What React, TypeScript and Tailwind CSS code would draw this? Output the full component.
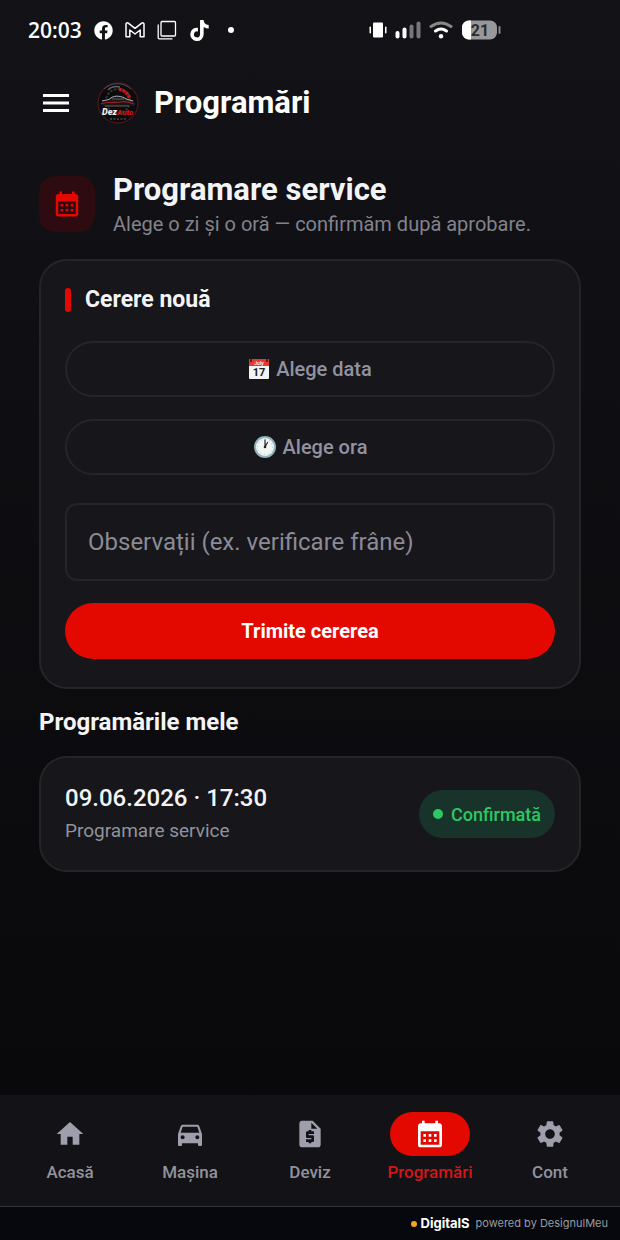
import { useState } from "react";
import {
  MdCalendarMonth,
  MdDirectionsCar,
  MdHome,
  MdRequestQuote,
  MdSettings,
} from "react-icons/md";
import { FaFacebook, FaTiktok } from "react-icons/fa";

const NAV = [
  { path: "#acasa", label: "Acasă", icon: MdHome },
  { path: "#masina", label: "Mașina", icon: MdDirectionsCar },
  { path: "#deviz", label: "Deviz", icon: MdRequestQuote },
  { path: "#programari", label: "Programări", icon: MdCalendarMonth },
  { path: "#cont", label: "Cont", icon: MdSettings },
];

const BOOKINGS = [
  { id: 1, when: "09.06.2026 · 17:30", title: "Programare service", status: "Confirmată" },
];

function StatusBar() {
  return (
    <div className="h-[60px] pl-7 pr-[119px] flex items-center justify-between text-white">
      <div className="flex items-center gap-3">
        <span className="font-['Open_Sans','Noto_Sans',sans-serif] text-[21px] font-semibold leading-6">20:03</span>
        <FaFacebook size={19} />
        <svg width="20" height="16" viewBox="0 0 20 16" fill="none" stroke="currentColor" strokeWidth="1.5" strokeLinejoin="round">
          <path d="M1 2v12.700h3.800V8L10 12l5.200-4v6.700H19V2c0-1-1.300-1.500-2.300-.8L10 6.300 3.300 1.200C2.300.5 1 1 1 2z" />
        </svg>
        <svg width="20" height="20" viewBox="0 0 20 20" fill="none" stroke="currentColor" strokeWidth="1.3">
          <rect x="4" y="1.500" width="14.500" height="14.500" rx="1" />
          <path d="M1.200 4.500v13.300c0 .6.400 1 1 1h13.300" />
        </svg>
        <FaTiktok size={21} />
        <span className="ml-1.5 w-1.5 h-1.5 rounded-full bg-white" />
      </div>

      <div className="flex items-center gap-2">
        <svg width="18" height="16" viewBox="0 0 18 16" fill="currentColor">
          <rect x="4" y="0.500" width="10" height="15" rx="1" />
          <rect x="0.500" y="4.500" width="1.500" height="7" rx="0.700" />
          <rect x="16" y="4.500" width="1.500" height="7" rx="0.700" />
        </svg>
        <svg width="26" height="18" viewBox="0 0 26 18" fill="currentColor">
          <rect x="0.500" y="10" width="4" height="7.500" rx="2" />
          <rect x="7.500" y="6.500" width="4" height="11" rx="2" />
          <rect x="14.500" y="3.500" width="4" height="14" rx="2" fill="#77777b" />
          <rect x="21.500" y="0.500" width="4" height="17" rx="2" fill="#77777b" />
        </svg>
        <svg width="24" height="18" viewBox="0 0 24 18" fill="none" strokeWidth="3" strokeLinecap="round">
          <path d="M2 5.500Q12-1.500 22 5.500" stroke="#88888b" />
          <path d="M6.500 10Q12 6 17.500 10" stroke="currentColor" />
          <circle cx="12" cy="15.200" r="2.200" fill="currentColor" />
        </svg>
        <svg width="40" height="20" viewBox="0 0 40 20">
          <rect x="1" y="0.500" width="35" height="19" rx="7" fill="#98989b" />
          <path d="M8 .5h2v19H8a7 7 0 0 1-7-7v-5a7 7 0 0 1 7-7z" fill="#fff" />
          <rect x="37.500" y="6" width="2" height="8" rx="1" fill="#88888b" />
          <text x="19" y="15.500" textAnchor="middle" fontFamily="Roboto, sans-serif" fontSize="16" fontWeight="700" fill="#2c2c30">21</text>
        </svg>
      </div>
    </div>
  );
}

function Logo() {
  return (
    <svg width="44" height="44" viewBox="0 0 44 44" className="shrink-0" role="img" aria-label="DezAuto">
      <circle cx="22" cy="22" r="20" fill="#0c0a0c" stroke="#4b1719" strokeWidth="1.300" />
      <path d="M8 8a20 20 0 0 1 27 0" fill="none" stroke="#4d4d51" strokeWidth="1" />
      <circle cx="22" cy="20" r="12" fill="none" stroke="#343438" strokeWidth="2" strokeDasharray="2.500 1.500" />
      <path d="M23 8.500a12 12 0 0 1 10.500 8.500" fill="none" stroke="#c31619" strokeWidth="3.500" strokeDasharray="3 0.700" />
      <path d="M12 9c3-3 8-4 12-3" fill="none" stroke="#656569" strokeWidth="1.500" />
      <path d="M5 22c3-3 7-3 10-6 3-2 10-2 14 1l9 3c2 1 2 4 0 5H7z" fill="#171719" />
      <path d="M6 20c4-1 7-1 9-3 4-3 11-2 15 1l7 2" fill="none" stroke="#b3b3b7" strokeWidth="1" />
      <path d="M5 23c7-3 13-1 19-2 5-1 9 0 14 2" fill="none" stroke="#a7191c" strokeWidth="1.200" />
      <path d="M16 18h12M9 25h24" stroke="#77777b" strokeWidth="0.800" />
      <text x="6" y="34" fontFamily="Roboto, sans-serif" fontSize="9" fontWeight="900" fontStyle="italic" fill="#f1f1f1">
        Dez<tspan fill="#d01317" fontSize="8">Auto</tspan>
      </text>
      <path d="M14 38h17" stroke="#606064" strokeWidth="1" strokeDasharray="2 1.500" />
    </svg>
  );
}

function DateIcon() {
  return (
    <svg width="22" height="22" viewBox="0 0 22 22" aria-hidden="true">
      <rect x="1" y="1" width="20" height="20" rx="1" fill="#f4f4f4" />
      <path d="M1 1h20v7H1z" fill="#e13a2e" />
      <path d="M2 1h2v3H2zM18 1h2v3h-2z" fill="#6c1c18" />
      <text x="11" y="6.500" textAnchor="middle" fontFamily="Roboto, sans-serif" fontSize="5" fill="#fff">July</text>
      <text x="11" y="18" textAnchor="middle" fontFamily="Roboto, sans-serif" fontSize="11" fontWeight="700" fill="#202020">17</text>
    </svg>
  );
}

function ClockIcon() {
  return (
    <svg width="24" height="24" viewBox="0 0 24 24" fill="none" aria-hidden="true">
      <circle cx="12" cy="12" r="10" fill="#f3f5f5" stroke="#8eb4bf" strokeWidth="2" />
      <circle cx="12" cy="12" r="7.500" stroke="#a5a8aa" strokeWidth="1" strokeDasharray="0.800 3.127" />
      <path d="M12 12V5M12 12l2.500-4.500" stroke="#333" strokeWidth="1.300" strokeLinecap="round" />
      <circle cx="12" cy="12" r="1.300" fill="#222" />
    </svg>
  );
}

export default function App() {
  const [active, setActive] = useState("Programări");
  const [notes, setNotes] = useState("");

  return (
    <div className="min-h-screen flex flex-col bg-linear-to-b from-[#121217] to-[#08080a] font-['Roboto',sans-serif] text-[#f4f4f7]">
      <StatusBar />

      <header className="h-[86px] px-10 flex items-center">
        <button aria-label="Meniu" className="w-8 h-8 flex items-center justify-center text-white">
          <svg width="26" height="18" viewBox="0 0 26 18" fill="currentColor">
            <path d="M0 0h26v3H0zM0 7.500h26v3H0zM0 15h26v3H0z" />
          </svg>
        </button>
        <div className="ml-6">
          <Logo />
        </div>
        <h1 className="ml-3.5 text-[31px] leading-9 font-bold text-white">Programări</h1>
      </header>

      <main className="flex-1 px-[39px] pt-[26px] pb-8">
        <div className="flex items-center gap-[18px]">
          <div className="w-14 h-14 rounded-2xl bg-[#2d0b10] flex items-center justify-center shrink-0">
            <MdCalendarMonth size={30} className="text-[#e30800]" />
          </div>
          <div>
            <h2 className="text-[31px] leading-9 font-bold">Programare service</h2>
            <p className="mt-1 text-xl leading-6 text-[#83838c]">Alege o zi și o oră — confirmăm după aprobare.</p>
          </div>
        </div>

        {/* New request */}
        <form
          onSubmit={(e) => e.preventDefault()}
          className="mt-[23px] rounded-[28px] border-2 border-[#242429] bg-[#16161b] px-6 pt-6 pb-7"
        >
          <div className="flex items-center gap-3.5">
            <span className="w-1.5 h-6 rounded-[3px] bg-[#e30800]" />
            <h3 className="text-[23px] leading-[30px] font-bold">Cerere nouă</h3>
          </div>
          <button type="button" className="mt-[26px] w-full h-14 rounded-full border-2 border-[#242429] flex items-center justify-center gap-1.5 text-xl font-medium text-[#9292a0]">
            <DateIcon />
            Alege data
          </button>
          <button type="button" className="mt-[22px] w-full h-14 rounded-full border-2 border-[#242429] flex items-center justify-center gap-1.5 text-xl font-medium text-[#9292a0]">
            <ClockIcon />
            Alege ora
          </button>
          <input
            type="text"
            aria-label="Observații"
            placeholder="Observații (ex. verificare frâne)"
            value={notes}
            onChange={(e) => setNotes(e.target.value)}
            className="mt-7 block w-full h-[78px] rounded-xl border-2 border-[#242429] bg-transparent px-[21px] text-2xl placeholder:text-[#8b8b96] outline-none"
          />
          <button type="submit" className="mt-[22px] w-full h-14 rounded-full bg-[#e30800] text-xl font-bold text-white">
            Trimite cererea
          </button>
        </form>

        {/* Bookings */}
        <h3 className="mt-[18px] text-2xl leading-[30px] font-bold">Programările mele</h3>
        {BOOKINGS.map((b) => (
          <article key={b.id} className="mt-[19px] h-[116px] rounded-[28px] border-2 border-[#242429] bg-[#16161b] px-6 flex items-center justify-between">
            <div>
              <p className="text-2xl leading-[30px] font-medium">{b.when}</p>
              <p className="mt-1 text-[19px] leading-7 text-[#92929c]">{b.title}</p>
            </div>
            <span className="h-12 px-3.5 rounded-full bg-[#18332a] flex items-center gap-2 text-[18px] font-medium text-[#2dc863]">
              <span className="w-2.5 h-2.5 rounded-full bg-[#2dc863]" />
              {b.status}
            </span>
          </article>
        ))}
      </main>

      <nav className="h-28 px-2.5 pt-[17px] grid grid-cols-5 bg-[#121217] border-b border-[#303237]">
        {NAV.map(({ path, label, icon: Icon }) => {
          const isActive = label === active;
          return (
            <a
              key={path}
              href={path}
              onClick={() => setActive(label)}
              className={`flex flex-col items-center gap-[5px] text-[17px] leading-[22px] font-medium ${isActive ? "text-[#d2171b]" : "text-[#92929d]"}`}
            >
              <span className={`w-20 h-11 rounded-full flex items-center justify-center ${isActive ? "bg-[#e30800] text-white" : "text-[#9e9eac]"}`}>
                <Icon size={32} />
              </span>
              {label}
            </a>
          );
        })}
      </nav>

      <footer className="h-[33px] pr-3 flex items-center justify-end bg-[#06080d] font-['Inter',sans-serif]">
        <span className="w-1.5 h-1.5 rounded-full bg-[#f7a823]" />
        <strong className="ml-1 text-[13px] font-bold text-white">DigitalS</strong>
        <span className="ml-1.5 text-[11px] text-[#989ca3]">powered by DesignulMeu</span>
      </footer>
    </div>
  );
}
